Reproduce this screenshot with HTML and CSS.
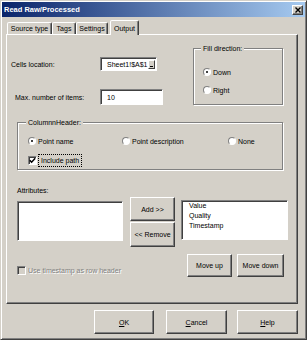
FILE: index.html
```html
<!DOCTYPE html>
<html>
<head>
<meta charset="utf-8">
<title>Read Raw/Processed</title>
<link rel="stylesheet" href="styles.css">
</head>
<body>
<div class="window">
  <div class="titlebar">
    <span class="title">Read Raw/Processed</span>
    <span class="close"><svg width="6" height="6" viewBox="0 0 6 6"><path d="M0.5 0.5L5.5 5.5M5.5 0.5L0.5 5.5" stroke="#000" stroke-width="1.4"/></svg></span>
  </div>
  <div class="tabs">
    <div class="tab t1">Source type</div>
    <div class="tab t2">Tags</div>
    <div class="tab t3">Settings</div>
    <div class="tab active t4">Output</div>
  </div>
  <div class="panel">
    <div class="row1">
      <div class="leftcol">
        <div class="field cells">
          <span class="lbl">Cells location:</span>
          <div class="refedit"><span class="val">Sheet1!$A$1</span><span class="refbtn"></span></div>
        </div>
        <div class="field maxitems">
          <span class="lbl">Max. number of items:</span>
          <div class="textbox">10</div>
        </div>
      </div>
      <fieldset class="group fill">
        <legend>Fill direction:</legend>
        <div class="radio"><span class="rb on"></span>Down</div>
        <div class="radio second"><span class="rb"></span>Right</div>
      </fieldset>
    </div>
    <fieldset class="group colhdr">
      <legend>ColumnnHeader:</legend>
      <div class="radios">
        <div class="radio w1"><span class="rb on"></span>Point name</div>
        <div class="radio w2"><span class="rb"></span>Point description</div>
        <div class="radio"><span class="rb"></span>None</div>
      </div>
      <div class="check">
        <span class="cb"><svg width="7" height="7" viewBox="0 0 7 7"><path d="M0.8 3.2L2.6 5.2L6.2 1.2" fill="none" stroke="#000" stroke-width="1.5"/></svg></span>
        <span class="focus">Include path</span>
      </div>
    </fieldset>
    <div class="attr-label">Attributes:</div>
    <div class="lists">
      <div class="listbox lb-left"></div>
      <div class="midbtns">
        <button class="btn add">Add &gt;&gt;</button>
        <button class="btn remove">&lt;&lt; Remove</button>
      </div>
      <div class="listbox lb-right">
        <div>Value</div>
        <div>Quality</div>
        <div>Timestamp</div>
      </div>
    </div>
    <div class="row4">
      <div class="check disabled"><span class="cb"></span><span class="dtext">Use timestamp as row header</span></div>
      <div class="movebtns">
        <button class="btn mv1">Move up</button>
        <button class="btn mv2">Move down</button>
      </div>
    </div>
  </div>
  <div class="bottom">
    <button class="btn ok"><u>O</u>K</button>
    <button class="btn cancel"><u>C</u>ancel</button>
    <button class="btn help"><u>H</u>elp</button>
  </div>
</div>
</body>
</html>
```
FILE: styles.css
```css
* { box-sizing: border-box; }
html, body { margin: 0; padding: 0; }
body {
  background: #d4d0c8;
  font-family: "Liberation Sans", Arial, sans-serif;
  font-size: 7px;
  color: #000;
}
.window {
  width: 307px;
  height: 340px;
  border: 1px solid;
  border-color: #d4d0c8 #404040 #404040 #d4d0c8;
  box-shadow: inset 1px 1px #fff, inset -1px -1px #808080;
  padding: 1px;
  background: #d4d0c8;
  overflow: hidden;
}
.titlebar {
  height: 15px;
  display: flex;
  align-items: center;
  justify-content: space-between;
  background: linear-gradient(to right, #0a246a, #a6caf0);
  padding: 0 2px 0 2px;
}
.title {
  color: #fff;
  font-weight: bold;
  font-size: 7.5px;
}
.close {
  width: 11px;
  height: 10px;
  background: #d4d0c8;
  border: 1px solid;
  border-color: #fff #404040 #404040 #fff;
  box-shadow: inset -1px -1px #808080;
  display: flex;
  align-items: center;
  justify-content: center;
}
.close svg { display: block; }

/* tabs */
.tabs {
  display: flex;
  align-items: flex-end;
  margin: 3px 0 -1px 5px;
  height: 15px;
  position: relative;
  z-index: 1;
}
.tab {
  height: 12px;
  margin-bottom: 1px;
  border: 1px solid;
  border-bottom: none;
  border-color: #fff #404040 transparent #fff;
  box-shadow: inset -1px 0 #808080;
  border-radius: 2px 2px 0 0;
  display: flex;
  align-items: center;
  justify-content: center;
  background: #d4d0c8;
  white-space: nowrap;
}
.t1 { width: 45px; }
.t2 { width: 24px; }
.t3 { width: 32px; }
.t4 { width: 29px; margin-left: 2px; }
.tab.active { height: 15px; margin-bottom: 0; }

/* panel */
.panel {
  margin-left: 4px;
  width: 292px;
  height: 270px;
  border: 1px solid;
  border-color: #fff #404040 #404040 #fff;
  box-shadow: inset -1px -1px #808080;
}

/* generic controls */
.sunken {
  background: #fff;
}
.refedit, .textbox, .listbox {
  background: #fff;
  border: 1px solid;
  border-color: #808080 #fff #fff #808080;
  box-shadow: inset 1px 1px #404040;
}
.btn {
  font: inherit;
  color: #000;
  background: #d4d0c8;
  border: 1px solid;
  border-color: #fff #404040 #404040 #fff;
  box-shadow: inset -1px -1px #808080;
  padding: 0;
  margin: 0;
  display: flex;
  align-items: center;
  justify-content: center;
  white-space: nowrap;
}
.btn u { text-decoration: underline; }

/* group boxes */
.group {
  margin: 0;
  padding: 0;
  border: 1px solid #808080;
  box-shadow: 1px 1px 0 #fff, inset 1px 1px 0 #fff;
  min-width: 0;
}
.group legend {
  padding: 0 2px;
  margin-left: -2px;
  line-height: 9px;
  background: #d4d0c8;
}

/* radios / checks */
.radio {
  display: flex;
  align-items: center;
  height: 10px;
  white-space: nowrap;
}
.rb {
  position: relative;
  width: 8px;
  height: 8px;
  border-radius: 50%;
  background: #fff;
  border: 1px solid;
  border-color: #808080 #fff #fff #808080;
  margin-right: 2px;
  flex: none;
}
.rb.on::after {
  content: "";
  position: absolute;
  left: 2px;
  top: 2px;
  width: 2px;
  height: 2px;
  border-radius: 50%;
  background: #000;
}
.check {
  display: flex;
  align-items: center;
  white-space: nowrap;
}
.cb {
  width: 9px;
  height: 9px;
  background: #fff;
  border: 1px solid;
  border-color: #808080 #fff #fff #808080;
  box-shadow: inset 1px 1px #404040;
  display: flex;
  align-items: center;
  justify-content: center;
  flex: none;
}
.cb svg { display: block; }

/* row 1 */
.row1 {
  display: flex;
  margin-top: 9px;
  padding-left: 4px;
}
.leftcol { width: 182px; }
.field { display: flex; align-items: center; }
.cells { margin-top: 13px; height: 14px; }
.cells .lbl { width: 89px; }
.maxitems { margin-top: 18px; height: 16px; padding-left: 4px; }
.maxitems .lbl { width: 85px; }
.refedit {
  width: 57px;
  height: 14px;
  display: flex;
  align-items: center;
  justify-content: space-between;
  padding: 0 1px 0 6px;
}
.refbtn {
  position: relative;
  width: 7px;
  height: 9px;
  background: #d4d0c8;
  border: 1px solid;
  border-color: #fff #404040 #404040 #fff;
}
.refbtn::after {
  content: "";
  position: absolute;
  left: 1px;
  bottom: 1px;
  width: 3px;
  height: 1px;
  background: #000;
}
.textbox {
  width: 63px;
  height: 16px;
  display: flex;
  align-items: center;
  padding-left: 6px;
}
.fill {
  width: 90px;
  height: 61px;
  padding: 14px 0 0 9px;
}
.fill .second { margin-top: 8px; }

/* column header group */
.colhdr {
  margin: 13px 0 0 10px;
  width: 266px;
  height: 52px;
  padding: 9px 0 0 10px;
}
.radios { display: flex; }
.w1 { width: 94px; }
.w2 { width: 106px; }
.colhdr .check { margin-top: 7px; height: 14px; }
.colhdr .cb { margin-right: 1px; }
.focus {
  border: 1px dotted #000;
  padding: 0 2px;
  line-height: 11px;
}

/* attributes */
.attr-label {
  margin: 16px 0 0 10px;
  line-height: 9px;
}
.lists {
  display: flex;
  align-items: flex-start;
  margin: 2px 0 0 10px;
}
.lb-left {
  width: 106px;
  height: 40px;
  margin-top: 4px;
}
.midbtns {
  display: flex;
  flex-direction: column;
  gap: 1px;
  margin-left: 7px;
}
.add { width: 45px; height: 24px; }
.remove { width: 45px; height: 25px; }
.lb-right {
  width: 107px;
  height: 40px;
  margin: 3px 0 0 6px;
  padding: 0 0 0 7px;
  line-height: 10px;
}

/* row 4 */
.row4 {
  display: flex;
  justify-content: space-between;
  align-items: flex-start;
  margin-top: 7px;
  padding: 0 13px 0 10px;
}
.disabled { margin-top: 12px; height: 9px; }
.disabled .cb {
  background: #d4d0c8;
  margin-right: 2px;
}
.dtext {
  color: #808080;
  text-shadow: 1px 1px 0 #fff;
}
.movebtns { display: flex; gap: 5px; }
.mv1 { width: 45px; height: 23px; }
.mv2 { width: 47px; height: 23px; }

/* bottom */
.bottom {
  display: flex;
  justify-content: flex-end;
  margin: 6px 0 0 4px;
  width: 292px;
}
.ok { width: 60px; height: 24px; }
.cancel { width: 61px; height: 24px; margin-left: 12px; }
.help { width: 61px; height: 24px; margin-left: 10px; }
```
